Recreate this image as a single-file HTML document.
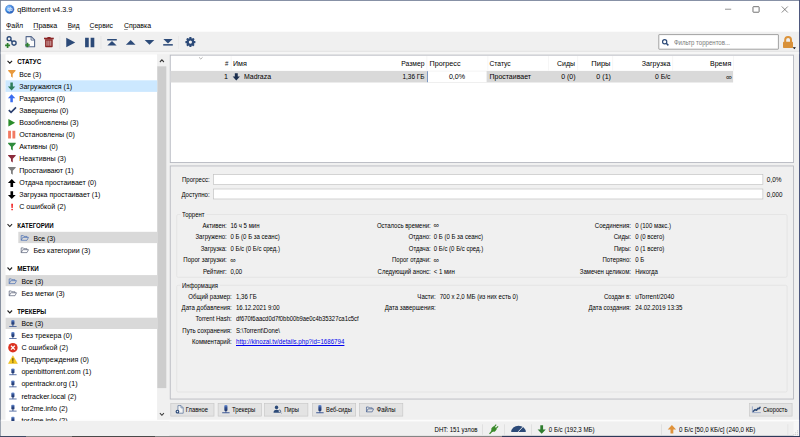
<!DOCTYPE html>
<html><head><meta charset="utf-8"><title>qBittorrent v4.3.9</title>
<style>
html,body{margin:0;padding:0;}
body{width:800px;height:437px;overflow:hidden;position:relative;background:#f0f0f0;font-family:'Liberation Sans',sans-serif;line-height:normal;}
span{display:block;position:absolute;white-space:pre;}
svg{position:absolute;overflow:visible;}
</style></head><body>
<svg style="left:0px;top:0px" width="801" height="33"><g transform="translate(0.000,0.000)"><rect width="800" height="31.7" fill="#fff"/></g></svg>
<svg style="left:0px;top:0px" width="801" height="2"><g transform="translate(0.000,0.000)"><rect width="800" height="0.8" fill="#6a7690"/></g></svg>
<svg style="left:0px;top:0px" width="2" height="438"><g transform="translate(0.000,0.000)"><rect width="0.8" height="437" fill="#6f7a8c"/></g></svg>
<svg style="left:799px;top:0px" width="2" height="438"><g transform="translate(0.100,0.000)"><rect width="0.9" height="437" fill="#3a4670"/></g></svg>
<svg style="left:0px;top:435px" width="801" height="3"><g transform="translate(0.000,0.900)"><rect width="800" height="1.1" fill="#858585"/></g></svg>
<svg style="left:0px;top:435px" width="27" height="3"><g transform="translate(0.000,0.900)"><rect width="26" height="1.1" fill="#3d4963"/></g></svg>
<svg style="left:72px;top:435px" width="84" height="3"><g transform="translate(0.000,0.900)"><rect width="83" height="1.1" fill="#4a4a4a"/></g></svg>
<svg style="left:502px;top:435px" width="299" height="3"><g transform="translate(0.000,0.900)"><rect width="298" height="1.1" fill="#2e3a5a"/></g></svg>
<svg style="left:1px;top:50px" width="799" height="3"><g transform="translate(0.000,0.900)"><rect width="798" height="1" fill="#dadada"/></g></svg>
<svg style="left:5px;top:4px" width="11" height="11"><g transform="translate(0.200,0.800)"><g transform="scale(0.45000,0.45000)"><defs><radialGradient id="qg" cx="35%" cy="30%" r="75%"><stop offset="0" stop-color="#8fc4ff"/><stop offset="0.6" stop-color="#3c82dc"/><stop offset="1" stop-color="#2a5fb4"/></radialGradient></defs><circle cx="10" cy="10" r="9.6" fill="url(#qg)" stroke="#2a63b8" stroke-width="0.8"/><text x="10" y="13.6" font-size="10" font-family="Liberation Sans" font-weight="bold" fill="#e8f2ff" text-anchor="middle">qb</text></g></g></svg>
<span style="left:17px;top:5px;font-size:7.6px;color:#000;transform-origin:0 0;transform:translateX(0.20px) scaleX(0.9508);">qBittorrent v4.3.9</span>
<svg style="left:725px;top:8px" width="8" height="3"><g transform="translate(0.000,0.800)"><rect width="6.2" height="0.7" fill="#666"/></g></svg>
<svg style="left:752px;top:6px" width="9" height="8"><g transform="translate(0.600,0.300)"><rect x="0.375" y="0.375" width="6.15" height="5.55" rx="0.5" fill="none" stroke="#444" stroke-width="0.75"/></g></svg>
<svg style="left:781px;top:6px" width="8" height="8"><g transform="translate(0.600,0.300)"><g transform="scale(0.64000,0.64000)"><path d="M0.3 0.3L9.7 9.7M9.7 0.3L0.3 9.7" stroke="#444" stroke-width="1.0" fill="none"/></g></g></svg>
<span style="left:6px;top:21px;font-size:7.3px;color:#000;transform-origin:0 0;transform:translateX(0.00px) scaleX(0.9581);">Файл</span>
<span style="left:33px;top:21px;font-size:7.3px;color:#000;transform-origin:0 0;transform:translateX(0.30px) scaleX(0.9734);">Правка</span>
<span style="left:67px;top:21px;font-size:7.3px;color:#000;transform-origin:0 0;transform:translateX(0.70px) scaleX(0.8937);">Вид</span>
<span style="left:89px;top:21px;font-size:7.3px;color:#000;transform-origin:0 0;transform:translateX(0.60px) scaleX(0.9360);">Сервис</span>
<span style="left:123px;top:21px;font-size:7.3px;color:#000;transform-origin:0 0;transform:translateX(0.90px) scaleX(0.9502);">Справка</span>
<svg style="left:6px;top:29px" width="6" height="2"><g transform="translate(0.200,0.000)"><rect width="4.6" height="0.6" fill="#555"/></g></svg>
<svg style="left:33px;top:29px" width="6" height="2"><g transform="translate(0.500,0.000)"><rect width="4.2" height="0.6" fill="#555"/></g></svg>
<svg style="left:67px;top:29px" width="6" height="2"><g transform="translate(0.800,0.000)"><rect width="3.6" height="0.6" fill="#555"/></g></svg>
<svg style="left:89px;top:29px" width="6" height="2"><g transform="translate(0.800,0.000)"><rect width="3.6" height="0.6" fill="#555"/></g></svg>
<svg style="left:124px;top:29px" width="5" height="2"><g transform="translate(0.100,0.000)"><rect width="3.6" height="0.6" fill="#555"/></g></svg>
<svg style="left:4px;top:35px" width="15" height="15"><g transform="translate(0.000,0.000)"><g transform="scale(1.00000,1.00000)"><g fill="none" stroke="#2c4a78"><circle cx="5.1" cy="3.7" r="1.95" stroke-width="1.35"/><circle cx="10" cy="8.1" r="2.1" stroke-width="1.35"/><path d="M6.4 5L8.6 6.9" stroke-width="1.5"/></g><path d="M3.6 7.9v5M1.1 10.4h5" stroke="#2e802e" stroke-width="1.7"/></g></g></svg>
<svg style="left:24px;top:35px" width="15" height="15"><g transform="translate(0.000,0.000)"><g transform="scale(1.00000,1.00000)"><path d="M2.1 1.6h5.2l3.3 3.3v6.8H2.1z" fill="#fbfbfb" stroke="#55688c" stroke-width="1.1" stroke-linejoin="round"/><path d="M7.1 1.9v3.2h3.3" fill="none" stroke="#55688c" stroke-width="0.9"/><path d="M3.5 7.7v4.6M1.2 10h4.6" stroke="#2e802e" stroke-width="1.7"/></g></g></svg>
<svg style="left:43px;top:36px" width="13" height="13"><g transform="translate(0.000,0.000)"><g transform="scale(1.00000,1.00000)"><g fill="#8c2626"><path d="M4.4 1h3.2v1H4.4z"/><path d="M1 1.7h9.8v1.6H1z"/><path d="M2.1 3.3h7.6v7.3q0 0.7-0.7 0.7H2.8q-0.7 0-0.7-0.7z"/></g><path d="M4 4.6v5.2M5.9 4.6v5.2M7.8 4.6v5.2" stroke="#f3e4e4" stroke-width="0.75"/></g></g></svg>
<svg style="left:59px;top:36px" width="3" height="14"><g transform="translate(0.500,0.000)"><rect width="0.7" height="13" fill="#e2e2e2"/></g></svg>
<svg style="left:66px;top:37px" width="11" height="12"><g transform="translate(0.000,0.600)"><g transform="scale(0.49474,0.49000)"><path d="M0.5 0.3L18.6 10L0.5 19.7z" fill="#2c4a78"/></g></g></svg>
<svg style="left:85px;top:37px" width="11" height="12"><g transform="translate(0.000,0.600)"><g transform="scale(0.49474,0.49000)"><path d="M0.2 0.4h7.4v19.2H0.2zM11.4 0.4h7.4v19.2h-7.4z" fill="#2c4a78"/></g></g></svg>
<svg style="left:100px;top:36px" width="3" height="14"><g transform="translate(0.600,0.000)"><rect width="0.7" height="13" fill="#e2e2e2"/></g></svg>
<svg style="left:107px;top:38px" width="11" height="9"><g transform="translate(0.000,0.900)"><g transform="scale(0.50000,0.50000)"><path d="M0.4 0.2h19.2v3H0.4z" fill="#2c4a78"/><path d="M10 4.4L19.3 13.4H0.7z" fill="#2c4a78"/></g></g></svg>
<svg style="left:125px;top:40px" width="12" height="6"><g transform="translate(0.800,0.000)"><g transform="scale(0.49000,0.49000)"><path d="M10 0.2L19.8 9.8H0.2z" fill="#2c4a78"/></g></g></svg>
<svg style="left:144px;top:40px" width="12" height="6"><g transform="translate(0.600,0.000)"><g transform="scale(0.49000,0.49000)"><path d="M10 9.8L19.8 0.2H0.2z" fill="#2c4a78"/></g></g></svg>
<svg style="left:163px;top:38px" width="11" height="9"><g transform="translate(0.000,0.900)"><g transform="scale(0.50000,0.50000)"><path d="M0.4 10.4h19.2v3H0.4z" fill="#2c4a78"/><path d="M10 9.2L19.3 0.2H0.7z" fill="#2c4a78"/></g></g></svg>
<svg style="left:178px;top:36px" width="2" height="14"><g transform="translate(0.300,0.000)"><rect width="0.7" height="13" fill="#e5e5e5"/></g></svg>
<svg style="left:185px;top:37px" width="12" height="12"><g transform="translate(0.000,0.000)"><g transform="scale(1.00000,1.00000)"><g fill="#2c4a78" transform="translate(5.4,5.1)"><circle r="3.85"/><rect x="-1.05" y="-5" width="2.1" height="10" rx="0.3"/><rect x="-1.05" y="-5" width="2.1" height="10" rx="0.3" transform="rotate(45)"/><rect x="-1.05" y="-5" width="2.1" height="10" rx="0.3" transform="rotate(90)"/><rect x="-1.05" y="-5" width="2.1" height="10" rx="0.3" transform="rotate(135)"/><circle r="1.6" fill="#f4f4f4"/></g></g></g></svg>
<svg style="left:658px;top:34px" width="122" height="17"><g transform="translate(0.400,0.200)"><rect x="0.4" y="0.4" width="119.60000000000001" height="14.6" rx="0.4" fill="#fff" stroke="#8c8c8c" stroke-width="0.8"/></g></svg>
<svg style="left:661px;top:38px" width="9" height="9"><g transform="translate(0.800,0.800)"><g transform="scale(0.51429,0.51429)"><circle cx="5.6" cy="5.6" r="4.1" fill="none" stroke="#2c4a78" stroke-width="2.3"/><path d="M8.6 8.6L12.8 12.8" stroke="#2c4a78" stroke-width="2.8"/></g></g></svg>
<span style="left:674px;top:39px;font-size:6.9px;color:#7a7a7a;transform-origin:0 0;transform:translateX(0.00px) scaleX(0.8806);">Фильтр торрентов...</span>
<svg style="left:782px;top:35px" width="13" height="15"><g transform="translate(0.000,0.000)"><g transform="scale(1.00000,1.00000)"><path d="M3.2 7.2V4.8a2.9 2.9 0 0 1 5.8 0V7.2" fill="none" stroke="#dc933a" stroke-width="2"/><rect x="1" y="6.8" width="10" height="6.2" rx="0.7" fill="#d8913a"/></g></g></svg>
<svg style="left:792px;top:47px" width="5" height="4"><g transform="translate(0.700,0.200)"><g transform="scale(0.53333,0.55556)"><path d="M0 0h6L3 3.6z" fill="#111"/></g></g></svg>
<svg style="left:0px;top:51px" width="801" height="5"><g transform="translate(0.800,0.600)"><rect width="798.3" height="2.6" fill="#f6f6f6"/></g></svg>
<svg style="left:5px;top:54px" width="154" height="368"><g transform="translate(0.500,0.400)"><rect width="151.7" height="366.6" fill="#fff"/></g></svg>
<svg style="left:0px;top:419px" width="801" height="4"><g transform="translate(0.800,0.700)"><rect width="798.3" height="1.7" fill="#fcfcfc"/></g></svg>
<svg style="left:157px;top:54px" width="13" height="367"><g transform="translate(0.200,0.400)"><rect width="11.2" height="365" fill="#f0f0f0"/></g></svg>
<svg style="left:157px;top:66px" width="11" height="324"><g transform="translate(0.300,0.300)"><rect width="9" height="321.8" fill="#cdcdcd"/></g></svg>
<svg style="left:159px;top:59px" width="7" height="5"><g transform="translate(0.500,0.200)"><g transform="scale(0.48000,0.50000)"><path d="M0.8 5.6L5 1.4L9.2 5.6" fill="none" stroke="#3a3a3a" stroke-width="2.2"/></g></g></svg>
<svg style="left:159px;top:412px" width="7" height="5"><g transform="translate(0.500,0.800)"><g transform="scale(0.48000,0.50000)"><path d="M0.8 0.8L5 5L9.2 0.8" fill="none" stroke="#3a3a3a" stroke-width="2.2"/></g></g></svg>
<svg style="left:5px;top:80px" width="154" height="13"><g transform="translate(0.500,0.300)"><rect width="151.7" height="11.6" fill="#cce8ff"/></g></svg>
<svg style="left:18px;top:231px" width="141" height="14"><g transform="translate(0.300,0.800)"><rect width="138.9" height="11.3" fill="#d9d9d9"/></g></svg>
<svg style="left:5px;top:275px" width="154" height="13"><g transform="translate(0.500,0.100)"><rect width="151.7" height="11.1" fill="#d9d9d9"/></g></svg>
<svg style="left:5px;top:317px" width="154" height="13"><g transform="translate(0.500,0.700)"><rect width="151.7" height="11.3" fill="#d9d9d9"/></g></svg>
<svg style="left:7px;top:60px" width="7" height="5"><g transform="translate(0.100,0.300)"><g transform="scale(0.54000,0.54688)"><path d="M0.8 0.9L5 5.2L9.2 0.9" fill="none" stroke="#222" stroke-width="2.1"/></g></g></svg>
<span style="left:17px;top:58px;font-size:6.9px;color:#000;transform-origin:0 0;transform:translateX(0.20px) scaleX(0.8993);font-weight:bold;">СТАТУС</span>
<svg style="left:7px;top:223px" width="7" height="6"><g transform="translate(0.100,0.700)"><g transform="scale(0.54000,0.54688)"><path d="M0.8 0.9L5 5.2L9.2 0.9" fill="none" stroke="#222" stroke-width="2.1"/></g></g></svg>
<span style="left:17px;top:222px;font-size:6.9px;color:#000;transform-origin:0 0;transform:translateX(0.20px) scaleX(0.8808);font-weight:bold;">КАТЕГОРИИ</span>
<svg style="left:7px;top:267px" width="7" height="5"><g transform="translate(0.100,0.000)"><g transform="scale(0.54000,0.54688)"><path d="M0.8 0.9L5 5.2L9.2 0.9" fill="none" stroke="#222" stroke-width="2.1"/></g></g></svg>
<span style="left:17px;top:265px;font-size:6.9px;color:#000;transform-origin:0 0;transform:translateX(0.20px) scaleX(0.9065);font-weight:bold;">МЕТКИ</span>
<svg style="left:7px;top:310px" width="7" height="5"><g transform="translate(0.100,0.000)"><g transform="scale(0.54000,0.54688)"><path d="M0.8 0.9L5 5.2L9.2 0.9" fill="none" stroke="#222" stroke-width="2.1"/></g></g></svg>
<span style="left:17px;top:308px;font-size:6.9px;color:#000;transform-origin:0 0;transform:translateX(0.20px) scaleX(0.8645);font-weight:bold;">ТРЕКЕРЫ</span>
<span style="left:19px;top:70px;font-size:7.3px;color:#000;transform-origin:0 0;transform:translateX(0.20px) scaleX(0.9349);">Все (3)</span>
<span style="left:19px;top:82px;font-size:7.3px;color:#000;transform-origin:0 0;transform:translateX(0.20px) scaleX(0.9656);">Загружаются (1)</span>
<span style="left:19px;top:94px;font-size:7.3px;color:#000;transform-origin:0 0;transform:translateX(0.20px) scaleX(0.9750);">Раздаются (0)</span>
<span style="left:19px;top:106px;font-size:7.3px;color:#000;transform-origin:0 0;transform:translateX(0.20px) scaleX(0.9750);">Завершены (0)</span>
<span style="left:19px;top:118px;font-size:7.3px;color:#000;transform-origin:0 0;transform:translateX(0.20px) scaleX(0.9804);">Возобновлены (3)</span>
<span style="left:19px;top:130px;font-size:7.3px;color:#000;transform-origin:0 0;transform:translateX(0.20px) scaleX(0.9750);">Остановлены (0)</span>
<span style="left:19px;top:142px;font-size:7.3px;color:#000;transform-origin:0 0;transform:translateX(0.20px) scaleX(0.9750);">Активны (0)</span>
<span style="left:19px;top:154px;font-size:7.3px;color:#000;transform-origin:0 0;transform:translateX(0.20px) scaleX(0.9750);">Неактивны (3)</span>
<span style="left:19px;top:166px;font-size:7.3px;color:#000;transform-origin:0 0;transform:translateX(0.20px) scaleX(0.9750);">Простаивают (1)</span>
<span style="left:19px;top:178px;font-size:7.3px;color:#000;transform-origin:0 0;transform:translateX(0.20px) scaleX(0.9651);">Отдача простаивает (0)</span>
<span style="left:19px;top:190px;font-size:7.3px;color:#000;transform-origin:0 0;transform:translateX(0.20px) scaleX(0.9597);">Загрузка простаивает (1)</span>
<span style="left:19px;top:202px;font-size:7.3px;color:#000;transform-origin:0 0;transform:translateX(0.20px) scaleX(0.9750);">С ошибкой (2)</span>
<span style="left:33px;top:234px;font-size:7.3px;color:#000;transform-origin:0 0;transform:translateX(0.40px) scaleX(0.9349);">Все (3)</span>
<span style="left:33px;top:246px;font-size:7.3px;color:#000;transform-origin:0 0;transform:translateX(0.40px) scaleX(0.9750);">Без категории (3)</span>
<span style="left:21px;top:277px;font-size:7.3px;color:#000;transform-origin:0 0;transform:translateX(0.40px) scaleX(0.9349);">Все (3)</span>
<span style="left:21px;top:289px;font-size:7.3px;color:#000;transform-origin:0 0;transform:translateX(0.40px) scaleX(0.9750);">Без метки (3)</span>
<span style="left:21px;top:319px;font-size:7.3px;color:#000;transform-origin:0 0;transform:translateX(0.40px) scaleX(0.9349);">Все (3)</span>
<span style="left:21px;top:331px;font-size:7.3px;color:#000;transform-origin:0 0;transform:translateX(0.40px) scaleX(0.9750);">Без трекера (0)</span>
<span style="left:21px;top:343px;font-size:7.3px;color:#000;transform-origin:0 0;transform:translateX(0.40px) scaleX(0.9750);">С ошибкой (2)</span>
<span style="left:21px;top:355px;font-size:7.3px;color:#000;transform-origin:0 0;transform:translateX(0.40px) scaleX(0.9750);">Предупреждения (0)</span>
<span style="left:21px;top:367px;font-size:7.3px;color:#000;transform-origin:0 0;transform:translateX(0.40px) scaleX(0.9750);">openbittorrent.com (1)</span>
<span style="left:21px;top:379px;font-size:7.3px;color:#000;transform-origin:0 0;transform:translateX(0.40px) scaleX(0.9750);">opentrackr.org (1)</span>
<span style="left:21px;top:392px;font-size:7.3px;color:#000;transform-origin:0 0;transform:translateX(0.40px) scaleX(0.9750);">retracker.local (2)</span>
<span style="left:21px;top:404px;font-size:7.3px;color:#000;transform-origin:0 0;transform:translateX(0.40px) scaleX(0.9750);">tor2me.info (2)</span>
<span style="left:21px;top:416px;font-size:7.3px;color:#000;transform-origin:0 0;transform:translateX(0.40px) scaleX(0.9750);">tor4me.info (2)</span>
<svg style="left:169px;top:54px" width="626" height="110"><g transform="translate(0.800,0.700)"><rect x="0.45" y="0.45" width="623.3000000000001" height="107.39999999999999" rx="0" fill="#fff" stroke="#b6b8c0" stroke-width="0.9"/></g></svg>
<svg style="left:170px;top:70px" width="565" height="14"><g transform="translate(0.500,0.900)"><rect width="562.6" height="11.6" fill="#d9d9d9"/></g></svg>
<svg style="left:230px;top:56px" width="3" height="16"><g transform="translate(0.800,0.000)"><rect width="0.6" height="14.6" fill="#f0f0f0"/></g></svg>
<svg style="left:426px;top:56px" width="3" height="16"><g transform="translate(0.600,0.000)"><rect width="0.6" height="14.6" fill="#f0f0f0"/></g></svg>
<svg style="left:487px;top:56px" width="3" height="16"><g transform="translate(0.600,0.000)"><rect width="0.6" height="14.6" fill="#f0f0f0"/></g></svg>
<svg style="left:548px;top:56px" width="2" height="16"><g transform="translate(0.000,0.000)"><rect width="0.6" height="14.6" fill="#f0f0f0"/></g></svg>
<svg style="left:577px;top:56px" width="3" height="16"><g transform="translate(0.500,0.000)"><rect width="0.6" height="14.6" fill="#f0f0f0"/></g></svg>
<svg style="left:612px;top:56px" width="3" height="16"><g transform="translate(0.500,0.000)"><rect width="0.6" height="14.6" fill="#f0f0f0"/></g></svg>
<svg style="left:672px;top:56px" width="3" height="16"><g transform="translate(0.500,0.000)"><rect width="0.6" height="14.6" fill="#f0f0f0"/></g></svg>
<svg style="left:733px;top:56px" width="2" height="16"><g transform="translate(0.000,0.000)"><rect width="0.6" height="14.6" fill="#f0f0f0"/></g></svg>
<span style="left:224px;top:60px;font-size:6.4px;color:#222;transform-origin:100% 0;transform:translateX(0.74px) scaleX(0.9500);">#</span>
<span style="left:233px;top:59px;font-size:7.3px;color:#000;transform-origin:0 0;transform:translateX(0.00px) scaleX(0.9750);">Имя</span>
<span style="left:399px;top:59px;font-size:7.3px;color:#000;transform-origin:100% 0;transform:translateX(0.41px) scaleX(0.9245);">Размер</span>
<span style="left:429px;top:59px;font-size:7.3px;color:#000;transform-origin:0 0;transform:translateX(0.50px) scaleX(0.9861);">Прогресс</span>
<span style="left:489px;top:59px;font-size:7.3px;color:#000;transform-origin:0 0;transform:translateX(0.50px) scaleX(0.9186);">Статус</span>
<span style="left:556px;top:59px;font-size:7.3px;color:#000;transform-origin:100% 0;transform:translateX(0.14px) scaleX(0.9544);">Сиды</span>
<span style="left:591px;top:59px;font-size:7.3px;color:#000;transform-origin:100% 0;transform:translateX(0.88px) scaleX(1.0309);">Пиры</span>
<span style="left:640px;top:59px;font-size:7.3px;color:#000;transform-origin:100% 0;transform:translateX(0.98px) scaleX(0.9758);">Загрузка</span>
<span style="left:709px;top:59px;font-size:7.3px;color:#000;transform-origin:100% 0;transform:translateX(0.25px) scaleX(0.9657);">Время</span>
<svg style="left:198px;top:57px" width="6" height="4"><g transform="translate(0.800,0.100)"><g transform="scale(0.50000,0.50000)"><path d="M0.5 0.5L4 3.9L7.5 0.5" fill="none" stroke="#8a8a8a" stroke-width="1.3"/></g></g></svg>
<span style="left:223px;top:72px;font-size:7.3px;color:#000;transform-origin:100% 0;transform:translateX(0.94px) scaleX(0.9750);">1</span>
<svg style="left:232px;top:73px" width="10" height="9"><g transform="translate(0.500,0.200)"><g transform="scale(0.50667,0.49333)"><path d="M4.6 0.3h5.8v6.6h4.3L7.5 14.8L0.3 6.9h4.3z" fill="#1c2f4f"/></g></g></svg>
<span style="left:244px;top:72px;font-size:7.3px;color:#000;transform-origin:0 0;transform:translateX(0.00px) scaleX(0.9510);">Madraza</span>
<span style="left:399px;top:72px;font-size:7.3px;color:#000;transform-origin:100% 0;transform:translateX(0.52px) scaleX(0.8806);">1,36 ГБ</span>
<svg style="left:427px;top:71px" width="61" height="13"><g transform="translate(0.000,0.200)"><rect width="59.6" height="11" fill="#fff"/></g></svg>
<svg style="left:427px;top:71px" width="2" height="13"><g transform="translate(0.000,0.200)"><rect width="0.8" height="11" fill="#5b7fb5"/></g></svg>
<span style="left:448px;top:72px;font-size:7.3px;color:#000;transform-origin:50% 0;transform:translateX(0.68px) scaleX(0.9750);">0,0%</span>
<span style="left:489px;top:72px;font-size:7.3px;color:#000;transform-origin:0 0;transform:translateX(0.50px) scaleX(0.9557);">Простаивает</span>
<span style="left:560px;top:72px;font-size:7.3px;color:#000;transform-origin:100% 0;transform:translateX(0.48px) scaleX(0.9523);">0 (0)</span>
<span style="left:595px;top:72px;font-size:7.3px;color:#000;transform-origin:100% 0;transform:translateX(0.98px) scaleX(0.9790);">0 (1)</span>
<span style="left:653px;top:72px;font-size:7.3px;color:#000;transform-origin:100% 0;transform:translateX(0.94px) scaleX(0.9358);">0 Б/с</span>
<span style="left:725px;top:72px;font-size:8.6px;color:#000;transform-origin:100% 0;transform:translateX(0.66px) scaleX(0.9500);">∞</span>
<svg style="left:169px;top:165px" width="626" height="236"><g transform="translate(0.800,0.500)"><rect x="0.45" y="0.45" width="623.3000000000001" height="233.1" rx="0" fill="#f0f0f0" stroke="#b8bac0" stroke-width="0.9"/></g></svg>
<svg style="left:213px;top:174px" width="552" height="12"><g transform="translate(0.200,0.300)"><rect x="0.325" y="0.325" width="549.35" height="9.95" rx="0" fill="#fff" stroke="#c0c0c0" stroke-width="0.65"/></g></svg>
<svg style="left:213px;top:188px" width="552" height="13"><g transform="translate(0.200,0.700)"><rect x="0.325" y="0.325" width="549.35" height="9.95" rx="0" fill="#fff" stroke="#c0c0c0" stroke-width="0.65"/></g></svg>
<span style="left:178px;top:176px;font-size:6.75px;color:#000;transform-origin:100% 0;transform:translateX(0.63px) scaleX(0.8912);">Прогресс:</span>
<span style="left:178px;top:191px;font-size:6.75px;color:#000;transform-origin:100% 0;transform:translateX(0.26px) scaleX(0.8997);">Доступно:</span>
<span style="left:766px;top:176px;font-size:6.75px;color:#000;transform-origin:0 0;transform:translateX(0.80px) scaleX(0.9616);">0,0%</span>
<span style="left:766px;top:191px;font-size:6.75px;color:#000;transform-origin:0 0;transform:translateX(0.80px) scaleX(0.9227);">0,000</span>
<svg style="left:176px;top:214px" width="613" height="65"><g transform="translate(0.400,0.200)"><rect x="0.3" y="0.3" width="610.4" height="62.8" rx="1.5" fill="none" stroke="#dedede" stroke-width="0.6"/></g></svg>
<svg style="left:176px;top:285px" width="613" height="109"><g transform="translate(0.400,0.000)"><rect x="0.3" y="0.3" width="610.4" height="106.7" rx="1.5" fill="none" stroke="#dedede" stroke-width="0.6"/></g></svg>
<svg style="left:180px;top:213px" width="28" height="4"><g transform="translate(0.500,0.000)"><rect width="26" height="3" fill="#f0f0f0"/></g></svg>
<svg style="left:180px;top:284px" width="41" height="4"><g transform="translate(0.500,0.000)"><rect width="39.5" height="3" fill="#f0f0f0"/></g></svg>
<span style="left:182px;top:211px;font-size:6.75px;color:#000;transform-origin:0 0;transform:translateX(0.00px) scaleX(0.8845);">Торрент</span>
<span style="left:182px;top:282px;font-size:6.75px;color:#000;transform-origin:0 0;transform:translateX(0.00px) scaleX(0.8711);">Информация</span>
<span style="left:199px;top:222px;font-size:6.75px;color:#000;transform-origin:100% 0;transform:translateX(0.53px) scaleX(0.8950);">Активен:</span>
<span style="left:230px;top:222px;font-size:6.75px;color:#000;transform-origin:0 0;transform:translateX(0.40px) scaleX(0.8950);">16 ч 5 мин</span>
<span style="left:369px;top:222px;font-size:6.75px;color:#000;transform-origin:100% 0;transform:translateX(0.90px) scaleX(0.8850);">Осталось времени:</span>
<span style="left:433px;top:221px;font-size:8.2px;color:#000;transform-origin:0 0;transform:translateX(0.60px) scaleX(0.9200);">∞</span>
<span style="left:590px;top:222px;font-size:6.75px;color:#000;transform-origin:100% 0;transform:translateX(0.53px) scaleX(0.8950);">Соединения:</span>
<span style="left:635px;top:222px;font-size:6.75px;color:#000;transform-origin:0 0;transform:translateX(0.20px) scaleX(0.8950);">0 (100 макс.)</span>
<span style="left:191px;top:233px;font-size:6.75px;color:#000;transform-origin:100% 0;transform:translateX(0.74px) scaleX(0.8950);">Загружено:</span>
<span style="left:230px;top:233px;font-size:6.75px;color:#000;transform-origin:0 0;transform:translateX(0.40px) scaleX(0.8950);">0 Б (0 Б за сеанс)</span>
<span style="left:405px;top:233px;font-size:6.75px;color:#000;transform-origin:100% 0;transform:translateX(0.53px) scaleX(0.8850);">Отдано:</span>
<span style="left:433px;top:233px;font-size:6.75px;color:#000;transform-origin:0 0;transform:translateX(0.70px) scaleX(0.8950);">0 Б (0 Б за сеанс)</span>
<span style="left:611px;top:233px;font-size:6.75px;color:#000;transform-origin:100% 0;transform:translateX(0.69px) scaleX(0.8950);">Сиды:</span>
<span style="left:635px;top:233px;font-size:6.75px;color:#000;transform-origin:0 0;transform:translateX(0.20px) scaleX(0.8950);">0 (0 всего)</span>
<span style="left:197px;top:245px;font-size:6.75px;color:#000;transform-origin:100% 0;transform:translateX(0.61px) scaleX(0.8950);">Загрузка:</span>
<span style="left:230px;top:245px;font-size:6.75px;color:#000;transform-origin:0 0;transform:translateX(0.40px) scaleX(0.8950);">0 Б/с (0 Б/с сред.)</span>
<span style="left:405px;top:245px;font-size:6.75px;color:#000;transform-origin:100% 0;transform:translateX(0.89px) scaleX(0.8850);">Отдача:</span>
<span style="left:433px;top:245px;font-size:6.75px;color:#000;transform-origin:0 0;transform:translateX(0.70px) scaleX(0.8950);">0 Б/с (0 Б/с сред.)</span>
<span style="left:611px;top:245px;font-size:6.75px;color:#000;transform-origin:100% 0;transform:translateX(0.89px) scaleX(0.8950);">Пиры:</span>
<span style="left:635px;top:245px;font-size:6.75px;color:#000;transform-origin:0 0;transform:translateX(0.20px) scaleX(0.8950);">0 (1 всего)</span>
<span style="left:178px;top:256px;font-size:6.75px;color:#000;transform-origin:100% 0;transform:translateX(0.28px) scaleX(0.8950);">Порог загрузки:</span>
<span style="left:230px;top:256px;font-size:8.2px;color:#000;transform-origin:0 0;transform:translateX(0.30px) scaleX(0.9200);">∞</span>
<span style="left:387px;top:256px;font-size:6.75px;color:#000;transform-origin:100% 0;transform:translateX(0.06px) scaleX(0.8850);">Порог отдачи:</span>
<span style="left:433px;top:256px;font-size:8.2px;color:#000;transform-origin:0 0;transform:translateX(0.60px) scaleX(0.9200);">∞</span>
<span style="left:599px;top:256px;font-size:6.75px;color:#000;transform-origin:100% 0;transform:translateX(0.08px) scaleX(0.8950);">Потеряно:</span>
<span style="left:635px;top:256px;font-size:6.75px;color:#000;transform-origin:0 0;transform:translateX(0.20px) scaleX(0.8950);">0 Б</span>
<span style="left:200px;top:268px;font-size:6.75px;color:#000;transform-origin:100% 0;transform:translateX(0.13px) scaleX(0.8950);">Рейтинг:</span>
<span style="left:230px;top:268px;font-size:6.75px;color:#000;transform-origin:0 0;transform:translateX(0.40px) scaleX(0.8950);">0,00</span>
<span style="left:370px;top:268px;font-size:6.75px;color:#000;transform-origin:100% 0;transform:translateX(0.72px) scaleX(0.8850);">Следующий анонс:</span>
<span style="left:433px;top:268px;font-size:6.75px;color:#000;transform-origin:0 0;transform:translateX(0.70px) scaleX(0.8950);">&lt; 1 мин</span>
<span style="left:573px;top:268px;font-size:6.75px;color:#000;transform-origin:100% 0;transform:translateX(0.78px) scaleX(0.8950);">Замечен целиком:</span>
<span style="left:635px;top:268px;font-size:6.75px;color:#000;transform-origin:0 0;transform:translateX(0.20px) scaleX(0.8950);">Никогда</span>
<span style="left:183px;top:293px;font-size:6.75px;color:#000;transform-origin:100% 0;transform:translateX(0.16px) scaleX(0.8950);">Общий размер:</span>
<span style="left:175px;top:304px;font-size:6.75px;color:#000;transform-origin:100% 0;transform:translateX(0.66px) scaleX(0.8950);">Дата добавления:</span>
<span style="left:191px;top:315px;font-size:6.75px;color:#000;transform-origin:100% 0;transform:translateX(0.27px) scaleX(0.8950);">Torrent Hash:</span>
<span style="left:176px;top:327px;font-size:6.75px;color:#000;transform-origin:100% 0;transform:translateX(0.57px) scaleX(0.8950);">Путь сохранения:</span>
<span style="left:187px;top:338px;font-size:6.75px;color:#000;transform-origin:100% 0;transform:translateX(0.41px) scaleX(0.8950);">Комментарий:</span>
<span style="left:236px;top:293px;font-size:6.75px;color:#000;transform-origin:0 0;transform:translateX(0.00px) scaleX(0.8950);">1,36 ГБ</span>
<span style="left:236px;top:304px;font-size:6.75px;color:#000;transform-origin:0 0;transform:translateX(0.00px) scaleX(0.8950);">16.12.2021 9:00</span>
<span style="left:236px;top:315px;font-size:6.75px;color:#000;transform-origin:0 0;transform:translateX(0.00px) scaleX(0.8717);">df670f6aacd0d7f0bb00b9ae0c4b35327ca1c5cf</span>
<span style="left:236px;top:327px;font-size:6.75px;color:#000;transform-origin:0 0;transform:translateX(0.00px) scaleX(0.8950);">S:\Torrent\Done\</span>
<span style="left:236px;top:338px;font-size:6.75px;color:#0000ee;transform-origin:0 0;transform:translateX(0.00px) scaleX(0.9126);text-decoration:underline;">http://kinozal.tv/details.php?id=1686794</span>
<span style="left:415px;top:293px;font-size:6.75px;color:#000;transform-origin:100% 0;transform:translateX(0.23px) scaleX(0.8950);">Части:</span>
<span style="left:439px;top:293px;font-size:6.75px;color:#000;transform-origin:0 0;transform:translateX(0.70px) scaleX(0.9006);">700 x 2,0 МБ (из них есть 0)</span>
<span style="left:378px;top:304px;font-size:6.75px;color:#000;transform-origin:100% 0;transform:translateX(0.71px) scaleX(0.8950);">Дата завершения:</span>
<span style="left:600px;top:293px;font-size:6.75px;color:#000;transform-origin:100% 0;transform:translateX(0.73px) scaleX(0.8950);">Создан в:</span>
<span style="left:635px;top:293px;font-size:6.75px;color:#000;transform-origin:0 0;transform:translateX(0.20px) scaleX(0.9362);">uTorrent/2040</span>
<span style="left:583px;top:304px;font-size:6.75px;color:#000;transform-origin:100% 0;transform:translateX(0.38px) scaleX(0.8950);">Дата создания:</span>
<span style="left:635px;top:304px;font-size:6.75px;color:#000;transform-origin:0 0;transform:translateX(0.20px) scaleX(0.8999);">24.02.2019 13:35</span>
<svg style="left:170px;top:403px" width="46" height="15"><g transform="translate(0.500,0.300)"><rect x="0.3" y="0.3" width="43.199999999999996" height="12.5" rx="0" fill="#e3e3e3" stroke="#c4c4c4" stroke-width="0.6"/></g></svg>
<span style="left:185px;top:406px;font-size:6.75px;color:#000;transform-origin:0 0;transform:translateX(0.80px) scaleX(0.8606);">Главное</span>
<svg style="left:217px;top:403px" width="46" height="15"><g transform="translate(0.800,0.300)"><rect x="0.3" y="0.3" width="43.199999999999996" height="12.5" rx="0" fill="#e3e3e3" stroke="#c4c4c4" stroke-width="0.6"/></g></svg>
<span style="left:231px;top:406px;font-size:6.75px;color:#000;transform-origin:0 0;transform:translateX(0.90px) scaleX(0.8816);">Трекеры</span>
<svg style="left:264px;top:403px" width="46" height="15"><g transform="translate(0.200,0.300)"><rect x="0.3" y="0.3" width="43.4" height="12.5" rx="0" fill="#e3e3e3" stroke="#c4c4c4" stroke-width="0.6"/></g></svg>
<span style="left:284px;top:406px;font-size:6.75px;color:#000;transform-origin:0 0;transform:translateX(0.20px) scaleX(0.8587);">Пиры</span>
<svg style="left:312px;top:403px" width="45" height="15"><g transform="translate(0.000,0.300)"><rect x="0.3" y="0.3" width="43.4" height="12.5" rx="0" fill="#e3e3e3" stroke="#c4c4c4" stroke-width="0.6"/></g></svg>
<span style="left:326px;top:406px;font-size:6.75px;color:#000;transform-origin:0 0;transform:translateX(0.10px) scaleX(0.8500);">Веб-сиды</span>
<svg style="left:359px;top:403px" width="46" height="15"><g transform="translate(0.100,0.300)"><rect x="0.3" y="0.3" width="43.4" height="12.5" rx="0" fill="#e3e3e3" stroke="#c4c4c4" stroke-width="0.6"/></g></svg>
<span style="left:376px;top:406px;font-size:6.75px;color:#000;transform-origin:0 0;transform:translateX(0.70px) scaleX(0.8717);">Файлы</span>
<svg style="left:749px;top:403px" width="45" height="15"><g transform="translate(0.300,0.300)"><rect x="0.3" y="0.3" width="42.5" height="12.5" rx="0" fill="#e3e3e3" stroke="#c4c4c4" stroke-width="0.6"/></g></svg>
<span style="left:763px;top:406px;font-size:6.75px;color:#000;transform-origin:0 0;transform:translateX(0.00px) scaleX(0.8369);">Скорость</span>
<span style="left:434px;top:426px;font-size:6.75px;color:#000;transform-origin:0 0;transform:translateX(0.50px) scaleX(0.9002);">DHT: 151 узлов</span>
<svg style="left:482px;top:424px" width="2" height="12"><g transform="translate(0.300,0.300)"><rect width="0.6" height="10.4" fill="#d6d6d6"/></g></svg>
<svg style="left:504px;top:424px" width="2" height="12"><g transform="translate(0.400,0.300)"><rect width="0.6" height="10.4" fill="#d6d6d6"/></g></svg>
<svg style="left:531px;top:424px" width="2" height="12"><g transform="translate(0.300,0.300)"><rect width="0.6" height="10.4" fill="#d6d6d6"/></g></svg>
<svg style="left:661px;top:424px" width="2" height="12"><g transform="translate(0.400,0.300)"><rect width="0.6" height="10.4" fill="#d6d6d6"/></g></svg>
<svg style="left:793px;top:421px" width="8" height="16"><g transform="translate(0.600,0.400)"><rect width="5.5" height="14.5" fill="#f7f7f7"/></g></svg>
<svg style="left:787px;top:424px" width="3" height="12"><g transform="translate(0.200,0.300)"><rect width="1.2" height="10.4" fill="#e7e7e7"/></g></svg>
<span style="left:548px;top:426px;font-size:6.75px;color:#000;transform-origin:0 0;transform:translateX(0.80px) scaleX(0.9069);">0 Б/с (192,3 МБ)</span>
<span style="left:679px;top:426px;font-size:6.75px;color:#000;transform-origin:0 0;transform:translateX(0.00px) scaleX(0.9198);">0 Б/с [50,0 КБ/с] (240,0 КБ)</span>
<svg style="left:8px;top:69px" width="9" height="10"><g transform="translate(0.100,0.900)"><g transform="scale(0.53571,0.54000)"><path d="M0.2 0.3h13.6v1.6L8.6 7.6V14.7L5.4 12.4V7.6L0.2 1.9z" fill="#e8993c"/></g></g></svg>
<svg style="left:7px;top:82px" width="10" height="10"><g transform="translate(0.800,0.350)"><g transform="scale(0.54286,0.54667)"><path d="M4.7 0.3h4.6v7.2h4.5L7 14.8L0.2 7.5h4.5z" fill="#2f7d5a"/></g></g></svg>
<svg style="left:7px;top:94px" width="10" height="10"><g transform="translate(0.800,0.200)"><g transform="scale(0.54286,0.54667)"><path d="M4.7 14.7h4.6V7.5h4.5L7 0.2L0.2 7.5h4.5z" fill="#3a6cf0"/></g></g></svg>
<svg style="left:8px;top:106px" width="10" height="9"><g transform="translate(0.200,0.750)"><g transform="scale(0.49412,0.50000)"><path d="M1.2 6.6L5.8 11L15.8 1.4" fill="none" stroke="#2b3f6e" stroke-width="3.4"/></g></g></svg>
<svg style="left:8px;top:118px" width="9" height="10"><g transform="translate(0.200,0.900)"><g transform="scale(0.50000,0.50667)"><path d="M0.3 0.2L13.8 7.5L0.3 14.8z" fill="#2a8c2a"/></g></g></svg>
<svg style="left:8px;top:130px" width="9" height="10"><g transform="translate(0.000,0.550)"><g transform="scale(0.52857,0.53333)"><path d="M0.2 0.2h5.4v14.6H0.2zM8.4 0.2h5.4v14.6H8.4z" fill="#f27a62"/></g></g></svg>
<svg style="left:8px;top:142px" width="9" height="10"><g transform="translate(0.000,0.700)"><g transform="scale(0.55714,0.53333)"><path d="M0.2 0.3h13.6v1.6L8.6 7.6V14.7L5.4 12.4V7.6L0.2 1.9z" fill="#2f8c3c"/></g></g></svg>
<svg style="left:8px;top:154px" width="9" height="10"><g transform="translate(0.000,0.750)"><g transform="scale(0.55714,0.53333)"><path d="M0.2 0.3h13.6v1.6L8.6 7.6V14.7L5.4 12.4V7.6L0.2 1.9z" fill="#8c2c3c"/></g></g></svg>
<svg style="left:8px;top:166px" width="9" height="10"><g transform="translate(0.000,0.800)"><g transform="scale(0.55714,0.53333)"><path d="M0.2 0.3h13.6v1.6L8.6 7.6V14.7L5.4 12.4V7.6L0.2 1.9z" fill="#7d7d7d"/></g></g></svg>
<svg style="left:7px;top:178px" width="10" height="11"><g transform="translate(0.800,0.850)"><g transform="scale(0.57143,0.54667)"><path d="M4.7 14.7h4.6V7.5h4.5L7 0.2L0.2 7.5h4.5z" fill="#000"/></g></g></svg>
<svg style="left:7px;top:191px" width="10" height="10"><g transform="translate(0.800,0.000)"><g transform="scale(0.57143,0.54667)"><path d="M4.7 0.3h4.6v7.2h4.5L7 14.8L0.2 7.5h4.5z" fill="#000"/></g></g></svg>
<svg style="left:11px;top:203px" width="4" height="9"><g transform="translate(0.000,0.550)"><g transform="scale(0.55000,0.52308)"><path d="M0.4 0.2h3.2L3.1 8.6H0.9z" fill="#f01818"/><rect x="0.7" y="10.2" width="2.6" height="2.6" fill="#f01818"/></g></g></svg>
<svg style="left:20px;top:235px" width="10" height="7"><g transform="translate(0.700,0.000)"><g transform="scale(0.41000,0.41429)"><path d="M1.2 12.6V1.4h5.2l1.6 2h7.4v2.4" fill="none" stroke="#3e66b0" stroke-width="1.6" stroke-linejoin="round"/><path d="M1.2 12.8L5 5.8h14L15.4 12.8z" fill="none" stroke="#3e66b0" stroke-width="1.6" stroke-linejoin="round"/></g></g></svg>
<svg style="left:20px;top:247px" width="10" height="8"><g transform="translate(0.700,0.300)"><g transform="scale(0.41000,0.41429)"><path d="M1.2 12.6V1.4h5.2l1.6 2h7.4v2.4" fill="none" stroke="#4d566e" stroke-width="1.6" stroke-linejoin="round"/><path d="M1.2 12.8L5 5.8h14L15.4 12.8z" fill="none" stroke="#4d566e" stroke-width="1.6" stroke-linejoin="round"/></g></g></svg>
<svg style="left:8px;top:278px" width="10" height="8"><g transform="translate(0.700,0.300)"><g transform="scale(0.41000,0.41429)"><path d="M1.2 12.6V1.4h5.2l1.6 2h7.4v2.4" fill="none" stroke="#3e66b0" stroke-width="1.6" stroke-linejoin="round"/><path d="M1.2 12.8L5 5.8h14L15.4 12.8z" fill="none" stroke="#3e66b0" stroke-width="1.6" stroke-linejoin="round"/></g></g></svg>
<svg style="left:8px;top:290px" width="10" height="8"><g transform="translate(0.700,0.400)"><g transform="scale(0.41000,0.41429)"><path d="M1.2 12.6V1.4h5.2l1.6 2h7.4v2.4" fill="none" stroke="#4d566e" stroke-width="1.6" stroke-linejoin="round"/><path d="M1.2 12.8L5 5.8h14L15.4 12.8z" fill="none" stroke="#4d566e" stroke-width="1.6" stroke-linejoin="round"/></g></g></svg>
<svg style="left:9px;top:319px" width="9" height="9"><g transform="translate(0.000,0.900)"><g transform="scale(0.48750,0.50000)"><defs><linearGradient id="tg" x1="0" y1="0" x2="0" y2="1"><stop offset="0" stop-color="#6f93d6"/><stop offset="0.45" stop-color="#2c4a8c"/><stop offset="1" stop-color="#22386c"/></linearGradient></defs><rect x="4.8" y="0.2" width="6.4" height="9.6" rx="1.6" fill="url(#tg)"/><rect x="7" y="9.6" width="2" height="3" fill="#2c4a8c"/><rect x="0.4" y="12.2" width="15.2" height="1.5" fill="#2c4a8c"/></g></g></svg>
<svg style="left:9px;top:332px" width="9" height="8"><g transform="translate(0.000,0.000)"><g transform="scale(0.48750,0.50000)"><defs><linearGradient id="tg" x1="0" y1="0" x2="0" y2="1"><stop offset="0" stop-color="#6f93d6"/><stop offset="0.45" stop-color="#2c4a8c"/><stop offset="1" stop-color="#22386c"/></linearGradient></defs><rect x="4.8" y="0.2" width="6.4" height="9.6" rx="1.6" fill="url(#tg)"/><rect x="7" y="9.6" width="2" height="3" fill="#2c4a8c"/><rect x="0.4" y="12.2" width="15.2" height="1.5" fill="#2c4a8c"/></g></g></svg>
<svg style="left:9px;top:368px" width="9" height="9"><g transform="translate(0.000,0.300)"><g transform="scale(0.48750,0.50000)"><defs><linearGradient id="tg" x1="0" y1="0" x2="0" y2="1"><stop offset="0" stop-color="#6f93d6"/><stop offset="0.45" stop-color="#2c4a8c"/><stop offset="1" stop-color="#22386c"/></linearGradient></defs><rect x="4.8" y="0.2" width="6.4" height="9.6" rx="1.6" fill="url(#tg)"/><rect x="7" y="9.6" width="2" height="3" fill="#2c4a8c"/><rect x="0.4" y="12.2" width="15.2" height="1.5" fill="#2c4a8c"/></g></g></svg>
<svg style="left:9px;top:380px" width="9" height="9"><g transform="translate(0.000,0.400)"><g transform="scale(0.48750,0.50000)"><defs><linearGradient id="tg" x1="0" y1="0" x2="0" y2="1"><stop offset="0" stop-color="#6f93d6"/><stop offset="0.45" stop-color="#2c4a8c"/><stop offset="1" stop-color="#22386c"/></linearGradient></defs><rect x="4.8" y="0.2" width="6.4" height="9.6" rx="1.6" fill="url(#tg)"/><rect x="7" y="9.6" width="2" height="3" fill="#2c4a8c"/><rect x="0.4" y="12.2" width="15.2" height="1.5" fill="#2c4a8c"/></g></g></svg>
<svg style="left:9px;top:392px" width="9" height="9"><g transform="translate(0.000,0.500)"><g transform="scale(0.48750,0.50000)"><defs><linearGradient id="tg" x1="0" y1="0" x2="0" y2="1"><stop offset="0" stop-color="#6f93d6"/><stop offset="0.45" stop-color="#2c4a8c"/><stop offset="1" stop-color="#22386c"/></linearGradient></defs><rect x="4.8" y="0.2" width="6.4" height="9.6" rx="1.6" fill="url(#tg)"/><rect x="7" y="9.6" width="2" height="3" fill="#2c4a8c"/><rect x="0.4" y="12.2" width="15.2" height="1.5" fill="#2c4a8c"/></g></g></svg>
<svg style="left:9px;top:404px" width="9" height="9"><g transform="translate(0.000,0.600)"><g transform="scale(0.48750,0.50000)"><defs><linearGradient id="tg" x1="0" y1="0" x2="0" y2="1"><stop offset="0" stop-color="#6f93d6"/><stop offset="0.45" stop-color="#2c4a8c"/><stop offset="1" stop-color="#22386c"/></linearGradient></defs><rect x="4.8" y="0.2" width="6.4" height="9.6" rx="1.6" fill="url(#tg)"/><rect x="7" y="9.6" width="2" height="3" fill="#2c4a8c"/><rect x="0.4" y="12.2" width="15.2" height="1.5" fill="#2c4a8c"/></g></g></svg>
<svg style="left:9px;top:416px" width="9" height="9"><g transform="translate(0.000,0.700)"><g transform="scale(0.48750,0.50000)"><defs><linearGradient id="tg" x1="0" y1="0" x2="0" y2="1"><stop offset="0" stop-color="#6f93d6"/><stop offset="0.45" stop-color="#2c4a8c"/><stop offset="1" stop-color="#22386c"/></linearGradient></defs><rect x="4.8" y="0.2" width="6.4" height="9.6" rx="1.6" fill="url(#tg)"/><rect x="7" y="9.6" width="2" height="3" fill="#2c4a8c"/><rect x="0.4" y="12.2" width="15.2" height="1.5" fill="#2c4a8c"/></g></g></svg>
<svg style="left:8px;top:342px" width="11" height="12"><g transform="translate(0.100,0.900)"><g transform="scale(0.48000,0.48000)"><circle cx="10" cy="10" r="9.8" fill="#dc3220"/><path d="M6 6L14 14M14 6L6 14" stroke="#fff" stroke-width="2.6"/></g></g></svg>
<svg style="left:8px;top:355px" width="11" height="10"><g transform="translate(0.200,0.400)"><g transform="scale(0.47000,0.46667)"><path d="M10 0.6L19.6 17.4H0.4z" fill="#f6c81e" stroke="#e0a800" stroke-width="0.8" stroke-linejoin="round"/><path d="M9 6h2l-0.4 6.4h-1.2z" fill="#000"/><rect x="9" y="13.4" width="2" height="2" fill="#000"/></g></g></svg>
<svg style="left:0px;top:421px" width="171" height="16"><g transform="translate(0.800,0.000)"><rect width="168.6" height="15" fill="#f0f0f0"/></g></svg>
<svg style="left:175px;top:405px" width="10" height="10"><g transform="translate(0.800,0.200)"><g transform="scale(0.48750,0.49412)"><path d="M4.4 0.8h6.4l4.4 4.4v11H4.4z" fill="#f4f4f4" stroke="#4d6a94" stroke-width="1.4"/><path d="M10.6 1v4.4h4.4" fill="none" stroke="#4d6a94" stroke-width="1.2"/><circle cx="3.4" cy="13" r="2.7" fill="#e6ecf6" stroke="#2c4a78" stroke-width="2.3"/></g></g></svg>
<svg style="left:222px;top:405px" width="9" height="10"><g transform="translate(0.000,0.000)"><g transform="scale(0.48750,0.60000)"><defs><linearGradient id="tg" x1="0" y1="0" x2="0" y2="1"><stop offset="0" stop-color="#6f93d6"/><stop offset="0.45" stop-color="#2c4a8c"/><stop offset="1" stop-color="#22386c"/></linearGradient></defs><rect x="4.8" y="0.2" width="6.4" height="9.6" rx="1.6" fill="url(#tg)"/><rect x="7" y="9.6" width="2" height="3" fill="#2c4a8c"/><rect x="0.4" y="12.2" width="15.2" height="1.5" fill="#2c4a8c"/></g></g></svg>
<svg style="left:273px;top:405px" width="10" height="10"><g transform="translate(0.200,0.400)"><g transform="scale(0.47778,0.50000)"><circle cx="7" cy="4" r="3.6" fill="#2c4a78"/><path d="M0.6 14.6q0-6 6.4-6t6.4 6z" fill="#2c4a78"/><circle cx="13.4" cy="11.6" r="2.4" fill="#e1e1e1" stroke="#2c4a78" stroke-width="1.4"/><path d="M15 13.4l2.4 2.2" stroke="#2c4a78" stroke-width="1.4"/></g></g></svg>
<svg style="left:316px;top:405px" width="9" height="10"><g transform="translate(0.000,0.000)"><g transform="scale(0.48750,0.60000)"><defs><linearGradient id="tg" x1="0" y1="0" x2="0" y2="1"><stop offset="0" stop-color="#6f93d6"/><stop offset="0.45" stop-color="#2c4a8c"/><stop offset="1" stop-color="#22386c"/></linearGradient></defs><rect x="4.8" y="0.2" width="6.4" height="9.6" rx="1.6" fill="url(#tg)"/><rect x="7" y="9.6" width="2" height="3" fill="#2c4a8c"/><rect x="0.4" y="12.2" width="15.2" height="1.5" fill="#2c4a8c"/></g></g></svg>
<svg style="left:366px;top:406px" width="9" height="8"><g transform="translate(0.000,0.400)"><g transform="scale(0.40000,0.42857)"><path d="M1.2 12.6V1.4h5.2l1.6 2h7.4v2.4" fill="none" stroke="#3e5a8c" stroke-width="1.6" stroke-linejoin="round"/><path d="M1.2 12.8L5 5.8h14L15.4 12.8z" fill="none" stroke="#3e5a8c" stroke-width="1.6" stroke-linejoin="round"/></g></g></svg>
<svg style="left:751px;top:405px" width="12" height="10"><g transform="translate(0.000,0.000)"><g transform="scale(1.00000,1.00000)"><path d="M1.4 1.4v6.2h8.4" fill="none" stroke="#8a9cc0" stroke-width="0.8"/><path d="M2.3 6.2l1.8-1.6l1.4 0.6l1.5-1.9l1 0.4l1.1-1.4" fill="none" stroke="#2c4a78" stroke-width="1.5" stroke-linejoin="round" stroke-linecap="round"/></g></g></svg>
<svg style="left:487px;top:423px" width="14" height="14"><g transform="translate(0.800,0.800)"><g transform="scale(1.14000,1.14000)"><g transform="rotate(42 5 5)" fill="#3a8a2a"><rect x="2.9" y="2.5" width="4.2" height="3.6" rx="1"/><path d="M3.3 5.6h3.4L5.6 7.4H4.4z"/><rect x="3.4" y="0.2" width="1" height="2.6"/><rect x="5.6" y="0.2" width="1" height="2.6"/><rect x="4.45" y="6.8" width="1.1" height="3.4"/></g></g></g></svg>
<svg style="left:511px;top:425px" width="16" height="9"><g transform="translate(0.000,0.600)"><g transform="scale(0.50000,0.50769)"><path d="M0.4 12.8A14.6 12.6 0 0 1 29.6 12.8z" fill="#2c4a78"/><path d="M14.4 12.2L23.6 2.6" stroke="#f0f0f0" stroke-width="1.8"/></g></g></svg>
<svg style="left:537px;top:425px" width="10" height="10"><g transform="translate(0.500,0.000)"><g transform="scale(0.60000,0.58667)"><path d="M4.7 0.3h4.6v7.2h4.5L7 14.8L0.2 7.5h4.5z" fill="#2f7d2f"/></g></g></svg>
<svg style="left:667px;top:425px" width="11" height="10"><g transform="translate(0.600,0.000)"><g transform="scale(0.61429,0.58667)"><path d="M4.7 14.7h4.6V7.5h4.5L7 0.2L0.2 7.5h4.5z" fill="#e0923a"/></g></g></svg>
<svg style="left:797px;top:430px" width="2" height="3"><g transform="translate(0.000,0.400)"><rect width="0.9" height="0.9" fill="#c0c0c0"/></g></svg>
<svg style="left:795px;top:432px" width="3" height="3"><g transform="translate(0.200,0.300)"><rect width="0.9" height="0.9" fill="#c0c0c0"/></g></svg>
<svg style="left:797px;top:432px" width="2" height="3"><g transform="translate(0.000,0.300)"><rect width="0.9" height="0.9" fill="#c0c0c0"/></g></svg>
<svg style="left:793px;top:434px" width="3" height="3"><g transform="translate(0.400,0.200)"><rect width="0.9" height="0.9" fill="#c0c0c0"/></g></svg>
<svg style="left:795px;top:434px" width="3" height="3"><g transform="translate(0.200,0.200)"><rect width="0.9" height="0.9" fill="#c0c0c0"/></g></svg>
<svg style="left:797px;top:434px" width="2" height="3"><g transform="translate(0.000,0.200)"><rect width="0.9" height="0.9" fill="#c0c0c0"/></g></svg>
</body></html>
